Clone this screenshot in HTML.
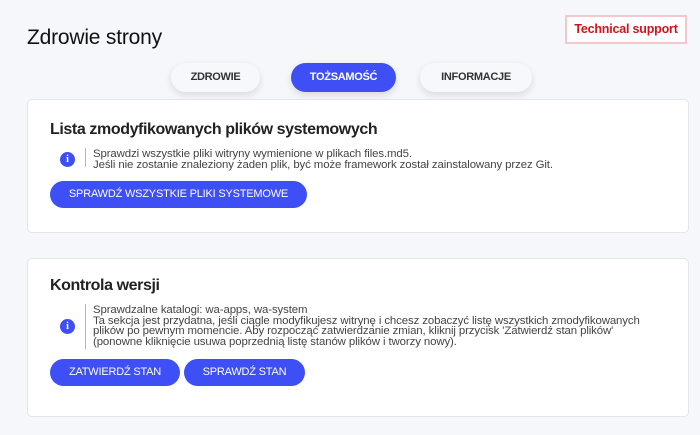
<!DOCTYPE html>
<html><head><meta charset="utf-8"><style>
*{box-sizing:border-box;margin:0;padding:0}
body{width:700px;height:435px;background:#f6f7fb;font-family:"Liberation Sans","DejaVu Sans",sans-serif;position:relative;overflow:hidden;color:#222}
.abs{position:absolute}
h1{position:absolute;left:27px;top:26px;font-size:21px;font-weight:normal;color:#111;letter-spacing:-0.2px}
.ts{left:565px;top:15px;width:122px;height:29px;border:2px solid #f2c8cc;background:#fff;color:#d0141c;font-weight:bold;font-size:12.5px;line-height:25px;text-align:center;letter-spacing:-0.2px}
.tab{top:63px;height:29px;border-radius:15px;background:#f7f8fb;box-shadow:0 3px 8px rgba(0,0,0,.12);font-size:11px;font-weight:bold;text-align:center;line-height:29px;color:#333;letter-spacing:-0.3px}
.tab.a{background:#3d4ff5;color:#fff}
.card{left:27px;width:662px;background:#fff;border:1px solid #e3e5ea;border-radius:5px}
.ct{left:50px;font-size:16px;font-weight:bold;color:#222;letter-spacing:-0.4px}
.ic{width:15px;height:15px;border-radius:50%;background:#3d4ff5;color:#fff;font:bold 10px "Liberation Serif",serif;text-align:center;line-height:15px}
.bar{left:85px;width:1px;background:#a8b0f0}
.tx{left:93px;font-size:11.4px;line-height:10.5px;color:#444;letter-spacing:-0.1px}
.btn{height:27px;border-radius:14px;background:#3d4ff5;color:#fff;font-size:11px;text-align:center;line-height:27px;letter-spacing:-0.2px}
</style></head><body>
<h1>Zdrowie strony</h1>
<div class="abs ts">Technical support</div>
<div class="abs tab" style="left:171px;width:89px">ZDROWIE</div>
<div class="abs tab a" style="left:291px;width:105px">TOŻSAMOŚĆ</div>
<div class="abs tab" style="left:420px;width:112px">INFORMACJE</div>

<div class="abs card" style="top:99px;height:134px"></div>
<div class="abs ct" style="top:121px">Lista zmodyfikowanych plików systemowych</div>
<div class="abs ic" style="left:60px;top:152px">i</div>
<div class="abs bar" style="top:148px;height:19px"></div>
<div class="abs tx" style="top:149px">Sprawdzi wszystkie pliki witryny wymienione w plikach files.md5.<br>Jeśli nie zostanie znaleziony żaden plik, być może framework został zainstalowany przez Git.</div>
<div class="abs btn" style="left:50px;top:181px;width:257px">SPRAWDŹ WSZYSTKIE PLIKI SYSTEMOWE</div>

<div class="abs card" style="top:258px;height:159px"></div>
<div class="abs ct" style="top:277px">Kontrola wersji</div>
<div class="abs ic" style="left:60px;top:319px">i</div>
<div class="abs bar" style="top:304px;height:45px"></div>
<div class="abs tx" style="top:305px">Sprawdzalne katalogi: wa-apps, wa-system<br>Ta sekcja jest przydatna, jeśli ciągle modyfikujesz witrynę i chcesz zobaczyć listę wszystkich zmodyfikowanych<br>plików po pewnym momencie. Aby rozpocząć zatwierdzanie zmian, kliknij przycisk 'Zatwierdź stan plików'<br>(ponowne kliknięcie usuwa poprzednią listę stanów plików i tworzy nowy).</div>
<div class="abs btn" style="left:50px;top:359px;width:130px">ZATWIERDŹ STAN</div>
<div class="abs btn" style="left:184px;top:359px;width:121px">SPRAWDŹ STAN</div>
</body></html>
